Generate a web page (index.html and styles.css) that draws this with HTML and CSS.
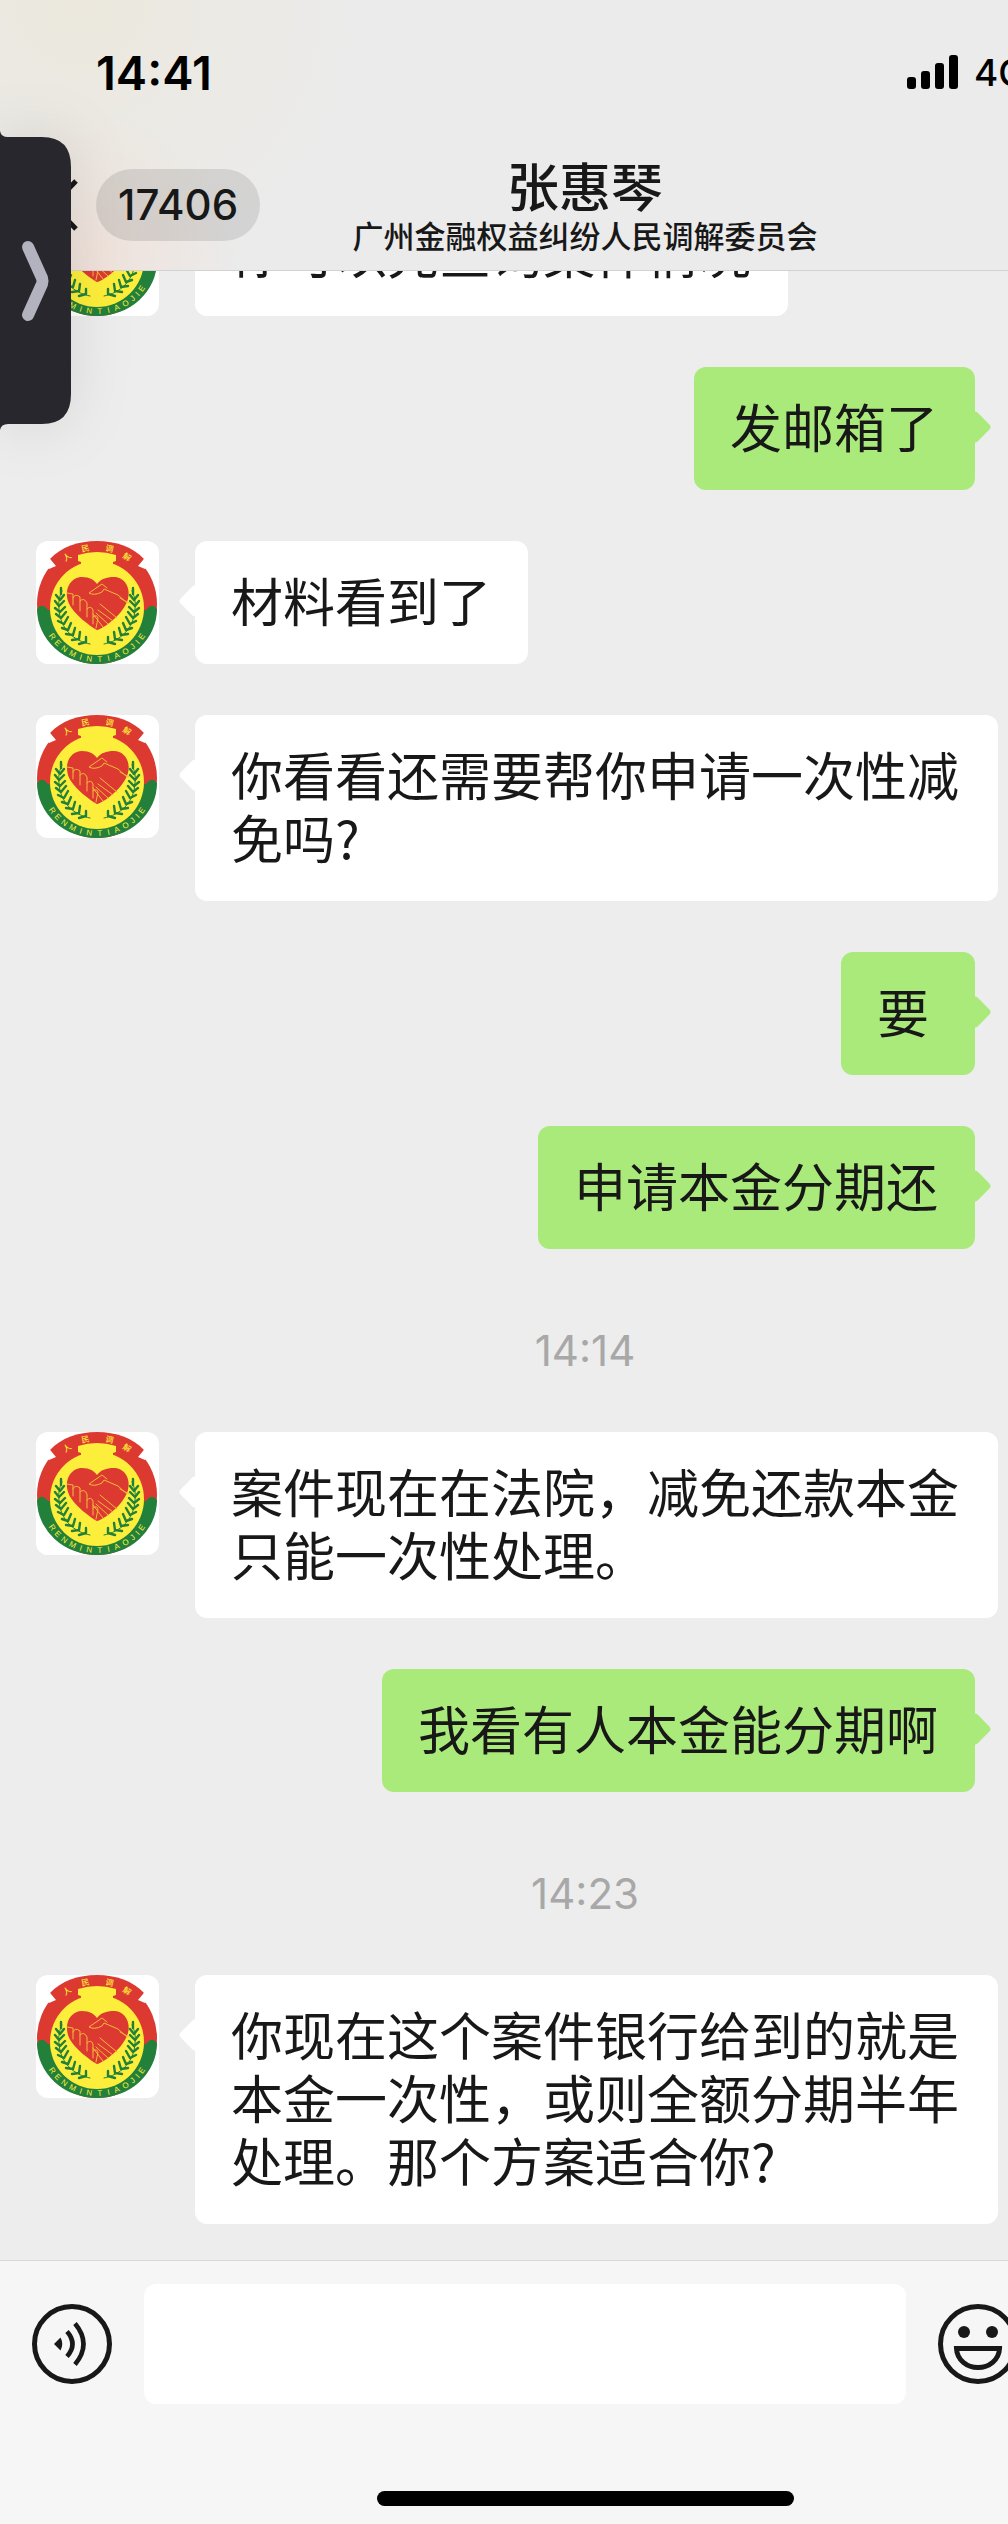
FILE: index.html
```html
<!DOCTYPE html>
<html lang="zh-CN">
<head>
  <meta charset="UTF-8" />
  <title>张惠琴</title>
  <meta name="viewport" content="width=device-width, initial-scale=1.0"/>
  <link rel="stylesheet" href="styles.css">
</head>
<body>
  <!-- 头像徽章 -->
  <svg class="sprite" xmlns="http://www.w3.org/2000/svg" aria-hidden="true">
    <defs>
      <g id="laurel" fill="none" stroke="#23803a" stroke-width="2.4" stroke-linecap="round">
        <path d="M54 103C38 100 24 88 23 68C22 60 24 54 26 50" stroke-width="1"/>
        <path d="M25 53L25 47M24 59L20 54M24 59L28 54M23 65L19 60M23 65L28 60M24 71L19 67M24 71L29 66M25 77L20 73M25 77L30 71M28 83L22 80M28 83L32 76M32 89L26 87M32 89L35 82M37 94L30 93M37 94L39 87M43 98L36 99M43 98L44 91M50 101L43 103M50 101L50 96"/>
      </g>
      <symbol id="emblem" viewBox="0 0 123 123">
        <rect width="123" height="123" fill="#fff"/>
        <circle cx="61" cy="63" r="60" fill="#dc3a31"/>
        <path d="M20 26L14 18C25 6 42 0 61 0S97 6 108 18L102 26Z" fill="#dc3a31"/>
        <path d="M14 18L20 25L13 28L8 23Z" fill="#fff"/>
        <path d="M108 18L102 25L109 28L114 23Z" fill="#fff"/>
        <path d="M1 68Q6 61 12 69L61 82L110 69Q116 61 121 68A60 55 0 0 1 1 68Z" fill="#23803a"/>
        <circle cx="61" cy="67" r="47" fill="#fdee3b"/>
        <path d="M45 26V21L42 20V14Q61 8 80 14V20L77 21V26Z" fill="#fdee3b"/>
        <path d="M61 89C57 87 36 73 32 60C28 46 36 36 46 36C54 36 58 39 61 43C65 38 70 36 78 36C88 36 95 46 92 58C88 73 67 88 61 89Z" fill="#dc3a31"/>
        <g fill="none" stroke="#f5b83c" stroke-width="1" stroke-linejoin="round" stroke-linecap="round">
          <path d="M31 52L37 53V64M37 57Q39 52 44 56V70M44 60Q48 56 51 62V76M51 68Q55 64 57 69V83M57 76Q61 73 62 77L60 87"/>
          <path d="M91 62L82 54L68 48L66 51Q58 55 53 52L66 43L71 47"/>
          <path d="M64 63L81 77M62 69L77 80M60 72L72 83M57 73L67 86M84 57L93 62"/>
        </g>
        <use href="#laurel"/>
        <use href="#laurel" transform="matrix(-1 0 0 1 122 0)"/>
        <g class="emblem-name">
          <text x="61" y="10" transform="rotate(-33 61 62)">人</text>
          <text x="61" y="9" transform="rotate(-12 61 62)">民</text>
          <text x="61" y="9" transform="rotate(13 61 62)">调</text>
          <text x="61" y="10" transform="rotate(33 61 62)">解</text>
        </g>
        <g class="emblem-latin">
          <text x="61" y="121" transform="rotate(54 61 63)">R</text>
          <text x="61" y="121" transform="rotate(45 61 63)">E</text>
          <text x="61" y="121" transform="rotate(36 61 63)">N</text>
          <text x="61" y="121" transform="rotate(26 61 63)">M</text>
          <text x="61" y="121" transform="rotate(17 61 63)">I</text>
          <text x="61" y="121" transform="rotate(8 61 63)">N</text>
          <text x="61" y="121" transform="rotate(-3 61 63)">T</text>
          <text x="61" y="121" transform="rotate(-12 61 63)">I</text>
          <text x="61" y="121" transform="rotate(-21 61 63)">A</text>
          <text x="61" y="121" transform="rotate(-31 61 63)">O</text>
          <text x="61" y="121" transform="rotate(-40 61 63)">J</text>
          <text x="61" y="121" transform="rotate(-47 61 63)">I</text>
          <text x="61" y="121" transform="rotate(-54 61 63)">E</text>
        </g>
      </symbol>
    </defs>
  </svg>

  <div class="screen">
    <!-- 顶部 -->
    <header class="header">
      <div class="status-bar">
        <span class="clock">14:41</span>
        <div class="network">
          <svg class="signal" viewBox="0 0 51 34" aria-hidden="true">
            <rect x="0" y="22" width="9" height="12" rx="3"/>
            <rect x="14" y="16" width="9" height="18" rx="3"/>
            <rect x="28" y="8" width="9" height="26" rx="3"/>
            <rect x="42" y="0" width="9" height="34" rx="3"/>
          </svg>
          <span>4G</span>
        </div>
      </div>
      <div class="nav">
        <button class="back-btn" aria-label="返回">
          <svg class="back-icon" viewBox="0 0 28 52" aria-hidden="true">
            <path d="M26 2L3 26L26 50" fill="none" stroke="#181818" stroke-width="5"/>
          </svg>
          <span class="unread">17406</span>
        </button>
        <div class="contact">
          <h1>张惠琴</h1>
          <p>广州金融权益纠纷人民调解委员会</p>
        </div>
      </div>
    </header>

    <!-- 聊天记录 -->
    <main class="chat">
      <div class="row">
        <svg class="avatar" role="img" aria-label="张惠琴"><use href="#emblem"/></svg>
        <p class="bubble">你可以先查询案件情况</p>
      </div>
      <div class="row mine">
        <p class="bubble">发邮箱了</p>
      </div>
      <div class="row">
        <svg class="avatar" role="img" aria-label="张惠琴"><use href="#emblem"/></svg>
        <p class="bubble">材料看到了</p>
      </div>
      <div class="row">
        <svg class="avatar" role="img" aria-label="张惠琴"><use href="#emblem"/></svg>
        <p class="bubble">你看看还需要帮你申请一次性减免吗?</p>
      </div>
      <div class="row mine">
        <p class="bubble">要</p>
      </div>
      <div class="row mine">
        <p class="bubble">申请本金分期还</p>
      </div>
      <time class="time">14:14</time>
      <div class="row">
        <svg class="avatar" role="img" aria-label="张惠琴"><use href="#emblem"/></svg>
        <p class="bubble">案件现在在法院，减免还款本金只能一次性处理。</p>
      </div>
      <div class="row mine">
        <p class="bubble">我看有人本金能分期啊</p>
      </div>
      <time class="time">14:23</time>
      <div class="row">
        <svg class="avatar" role="img" aria-label="张惠琴"><use href="#emblem"/></svg>
        <p class="bubble">你现在这个案件银行给到的就是本金一次性，或则全额分期半年处理。那个方案适合你?</p>
      </div>
    </main>

    <!-- 输入栏 -->
    <footer class="composer">
      <div class="composer-row">
        <button class="icon-btn" aria-label="语音">
          <svg viewBox="0 0 80 80" fill="none" stroke="#181818" stroke-width="5">
            <circle cx="40" cy="40" r="37.5"/>
            <path d="M22 40L28.500 33.500Q32 40 28.500 46.500Z" fill="#181818" stroke="none"/>
            <path d="M35 27.500Q46 40 35 52.500M43 19.500Q60 40 43 60.500" stroke-width="4.600"/>
          </svg>
        </button>
        <input class="message-input" type="text" aria-label="输入消息">
        <button class="icon-btn" aria-label="表情">
          <svg viewBox="0 0 80 80" fill="none" stroke="#181818" stroke-width="5">
            <circle cx="40" cy="40" r="37.5"/>
            <circle cx="26" cy="28" r="6" fill="#181818" stroke="none"/>
            <circle cx="54" cy="28" r="6" fill="#181818" stroke="none"/>
            <path d="M18.500 44.500H61.500C61 56 51 63.500 40 63.500S19 56 18.500 44.500Z"/>
          </svg>
        </button>
      </div>
      <div class="home-indicator"></div>
    </footer>
  </div>

  <!-- 左侧悬浮把手 -->
  <button class="side-tab" aria-label="展开">
    <svg viewBox="0 0 71 299" aria-hidden="true">
      <path d="M0 0Q1 6 8 6H42Q71 6 71 36V263Q71 293 42 293H8Q1 293 0 299Z" fill="#27272d"/>
      <path d="M28 116L42 147Q43 150 42 153L28 184" fill="none" stroke="#b3b3c0" stroke-width="12" stroke-linecap="round" stroke-linejoin="round"/>
    </svg>
  </button>
</body>
</html>
```
FILE: styles.css
```css
* {
  box-sizing: border-box;
}
body {
  margin: 0;
  background: #ededed;
  color: #181818;
  font-family: "Noto Sans CJK SC", sans-serif;
  overflow: hidden;
}
button {
  padding: 0;
  border: none;
  background: none;
  color: inherit;
  cursor: pointer;
}
.sprite {
  position: absolute;
  width: 0;
  height: 0;
}

/* 屏幕右侧超出窗口 */
.screen {
  display: flex;
  flex-direction: column;
  width: calc(100% + 162px);
  height: 100vh;
}

/* ======================
   顶部
   ====================== */
.header {
  flex: none;
  border-bottom: 1px solid #d2d2d2;
  background:
    radial-gradient(circle at 80px 270px, rgba(245, 215, 200, 0.5), rgba(245, 215, 200, 0) 160px),
    radial-gradient(circle at 80px 0, rgba(236, 230, 212, 0.6), rgba(236, 230, 212, 0) 280px),
    #ebebeb;
}
.status-bar {
  display: flex;
  justify-content: space-between;
  align-items: center;
  height: 144px;
  padding: 0 152px 0 96px;
  color: #000;
  font-family: Inter, sans-serif;
}
.clock {
  font-size: 47px;
  font-weight: 600;
}
.network {
  display: flex;
  align-items: center;
  gap: 16px;
  width: 111px;
  font-size: 37px;
  font-weight: 500;
}
.signal {
  flex: none;
  width: 51px;
  height: 34px;
}
.nav {
  display: grid;
  grid-template-columns: 1fr auto 1fr;
  align-items: center;
  height: 126px;
  padding-bottom: 4px;
}
.back-btn {
  display: flex;
  align-items: center;
  gap: 18px;
  padding-left: 50px;
}
.back-icon {
  width: 28px;
  height: 52px;
}
.unread {
  padding: 0 22px;
  border-radius: 36px;
  background: rgba(0, 0, 0, 0.1);
  font-family: Inter, sans-serif;
  font-size: 42px;
  font-weight: 500;
  line-height: 72px;
}
.contact {
  text-align: center;
}
.contact h1 {
  margin: 0;
  font-size: 52px;
  font-weight: 500;
  line-height: 60px;
}
.contact p {
  margin: 0;
  font-size: 31px;
  font-weight: 500;
  line-height: 40px;
}

/* ======================
   聊天记录
   ====================== */
.chat {
  display: flex;
  flex: 1;
  flex-direction: column;
  justify-content: flex-end;
  gap: 51px;
  min-height: 0;
  padding-bottom: 36px;
  overflow: hidden;
}
.row {
  display: flex;
  flex: none;
  align-items: flex-start;
  gap: 36px;
  padding: 0 172px 0 36px;
}
.avatar {
  flex: none;
  width: 123px;
  height: 123px;
  border-radius: 12px;
}
.emblem-name,
.emblem-latin {
  fill: #fdee3b;
  font-size: 8px;
  font-weight: 500;
  text-anchor: middle;
}
.emblem-latin {
  font-family: "Liberation Sans", sans-serif;
}
.bubble {
  position: relative;
  min-width: 134px;
  margin: 0;
  padding: 27px 37px 33px 36px;
  border-radius: 12px;
  background: #fff;
  font-size: 52px;
  line-height: 63px;
}
.bubble::before {
  content: "";
  position: absolute;
  top: 48px;
  left: -12px;
  width: 24px;
  height: 24px;
  border-radius: 4px;
  background: inherit;
  transform: rotate(45deg);
}
.row.mine {
  justify-content: flex-end;
  padding-right: 195px;
}
.mine .bubble {
  background: #a9ea7a;
}
.mine .bubble::before {
  right: -12px;
  left: auto;
}
.time {
  flex: none;
  padding-top: 21px;
  color: #a8a8a8;
  font-family: Inter, sans-serif;
  font-size: 42px;
  line-height: 60px;
  text-align: center;
}

/* ======================
   输入栏
   ====================== */
.composer {
  flex: none;
  padding: 23px 0 18px;
  border-top: 1px solid #d8d8d8;
  background: #f6f6f6;
}
.composer-row {
  display: flex;
  align-items: center;
  gap: 32px;
  padding: 0 152px 0 32px;
}
.icon-btn {
  flex: none;
  width: 80px;
  height: 80px;
}
.icon-btn svg {
  display: block;
}
.message-input {
  flex: 1;
  min-width: 0;
  height: 120px;
  padding: 0 24px;
  border: none;
  border-radius: 12px;
  background: #fff;
  font-family: inherit;
  font-size: 52px;
}
.home-indicator {
  width: 417px;
  height: 15px;
  margin: 87px auto 0;
  border-radius: 8px;
  background: #000;
}

/* ======================
   左侧悬浮把手
   ====================== */
.side-tab {
  position: fixed;
  top: 131px;
  left: 0;
  width: 71px;
  height: 299px;
  filter: drop-shadow(0 0 30px rgba(0, 0, 0, 0.1));
}
.side-tab svg {
  display: block;
}
```
